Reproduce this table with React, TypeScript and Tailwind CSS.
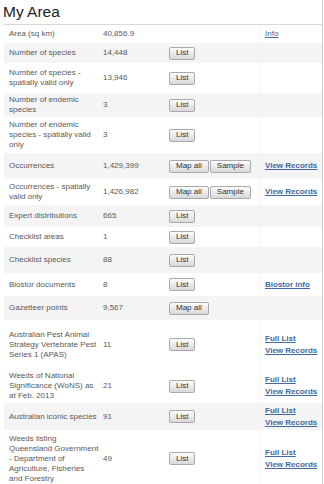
import React from "react";

interface AreaLink {
  text: string;
  bold?: boolean;
}

interface AreaRow {
  label: string;
  value: string;
  rowClass: string;
  buttons: string[];
  links: AreaLink[];
}

const rows: AreaRow[] = [
  { label: "Area (sq km)", value: "40,856.9", rowClass: "h-[18px] bg-white", buttons: [], links: [{ text: "Info" }] },
  { label: "Number of species", value: "14,448", rowClass: "h-[20px] bg-[#f4f4f4]", buttons: ["List"], links: [] },
  { label: "Number of species - spatially valid only", value: "13,946", rowClass: "h-[30px] bg-white", buttons: ["List"], links: [] },
  { label: "Number of endemic species", value: "3", rowClass: "h-[24px] bg-[#f4f4f4]", buttons: ["List"], links: [] },
  { label: "Number of endemic species - spatially valid only", value: "3", rowClass: "h-[36px] bg-white", buttons: ["List"], links: [] },
  { label: "Occurrences", value: "1,429,399", rowClass: "h-[26px] bg-[#f4f4f4]", buttons: ["Map all", "Sample"], links: [{ text: "View Records", bold: true }] },
  { label: "Occurrences - spatially valid only", value: "1,426,982", rowClass: "h-[26px] bg-white", buttons: ["Map all", "Sample"], links: [{ text: "View Records", bold: true }] },
  { label: "Expert distributions", value: "665", rowClass: "h-[22px] bg-[#f4f4f4]", buttons: ["List"], links: [] },
  { label: "Checklist areas", value: "1", rowClass: "h-[20px] bg-white", buttons: ["List"], links: [] },
  { label: "Checklist species", value: "88", rowClass: "h-[26px] bg-[#f4f4f4]", buttons: ["List"], links: [] },
  { label: "Biostor documents", value: "8", rowClass: "h-[23px] bg-white", buttons: ["List"], links: [{ text: "Biostor info", bold: true }] },
  { label: "Gazetteer points", value: "9,567", rowClass: "h-[24px] bg-[#f4f4f4]", buttons: ["Map all"], links: [] },
  {
    label: "Australian Pest Animal Strategy Vertebrate Pest Series 1 (APAS)",
    value: "11",
    rowClass: "h-[49px] bg-white",
    buttons: ["List"],
    links: [{ text: "Full List", bold: true }, { text: "View Records", bold: true }],
  },
  {
    label: "Weeds of National Significance (WoNS) as at Feb. 2013",
    value: "21",
    rowClass: "h-[34px] bg-white",
    buttons: ["List"],
    links: [{ text: "Full List", bold: true }, { text: "View Records", bold: true }],
  },
  {
    label: "Australian iconic species",
    value: "91",
    rowClass: "h-[27px] bg-[#f4f4f4]",
    buttons: ["List"],
    links: [{ text: "Full List", bold: true }, { text: "View Records", bold: true }],
  },
  {
    label: "Weeds listing Queensland Government - Department of Agriculture, Fisheries and Forestry",
    value: "49",
    rowClass: "h-[57px] bg-white",
    buttons: ["List"],
    links: [{ text: "Full List", bold: true }, { text: "View Records", bold: true }],
  },
];

const SmallButton = ({ text }: { text: string }) => (
  <button className="h-[13px] rounded-[2px] border border-[#a9a9a9] bg-linear-to-b from-[#fcfcfc] to-[#d9d9d9] px-[6px] text-[8px] leading-none text-[#333]">
    {text}
  </button>
);

export default function App() {
  return (
    <div className="h-[484px] w-[323px] overflow-hidden border-r border-[#cfcfcf] bg-white font-['Liberation_Sans',Arial,sans-serif]">
      <h1 className="pl-[3px] pt-[3px] text-[15.5px] leading-[18px] text-[#222]">My Area</h1>
      <div className="ml-[4px] mt-[3px] border-t border-[#d9d9d9] text-[8px] leading-[10px] text-[#595959]">
        {rows.map((row) => (
          <div key={row.label} className={`flex items-center ${row.rowClass}`}>
            <div className="w-[95px] shrink-0 pl-[5px]">{row.label}</div>
            <div className="w-[70px] shrink-0 pl-[4px]">{row.value}</div>
            <div className="flex w-[91px] shrink-0 gap-[1px]">
              {row.buttons.map((b) => (
                <SmallButton key={b} text={b} />
              ))}
            </div>
            <div className="flex h-full flex-col justify-center border-l border-[#f3f3f3] pl-[4px] leading-[12px]">
              {row.links.map((l) => (
                <a
                  key={l.text}
                  href="#"
                  className={`text-[#4269a0] underline ${l.bold ? "font-bold" : ""}`}
                >
                  {l.text}
                </a>
              ))}
            </div>
          </div>
        ))}
      </div>
    </div>
  );
}
